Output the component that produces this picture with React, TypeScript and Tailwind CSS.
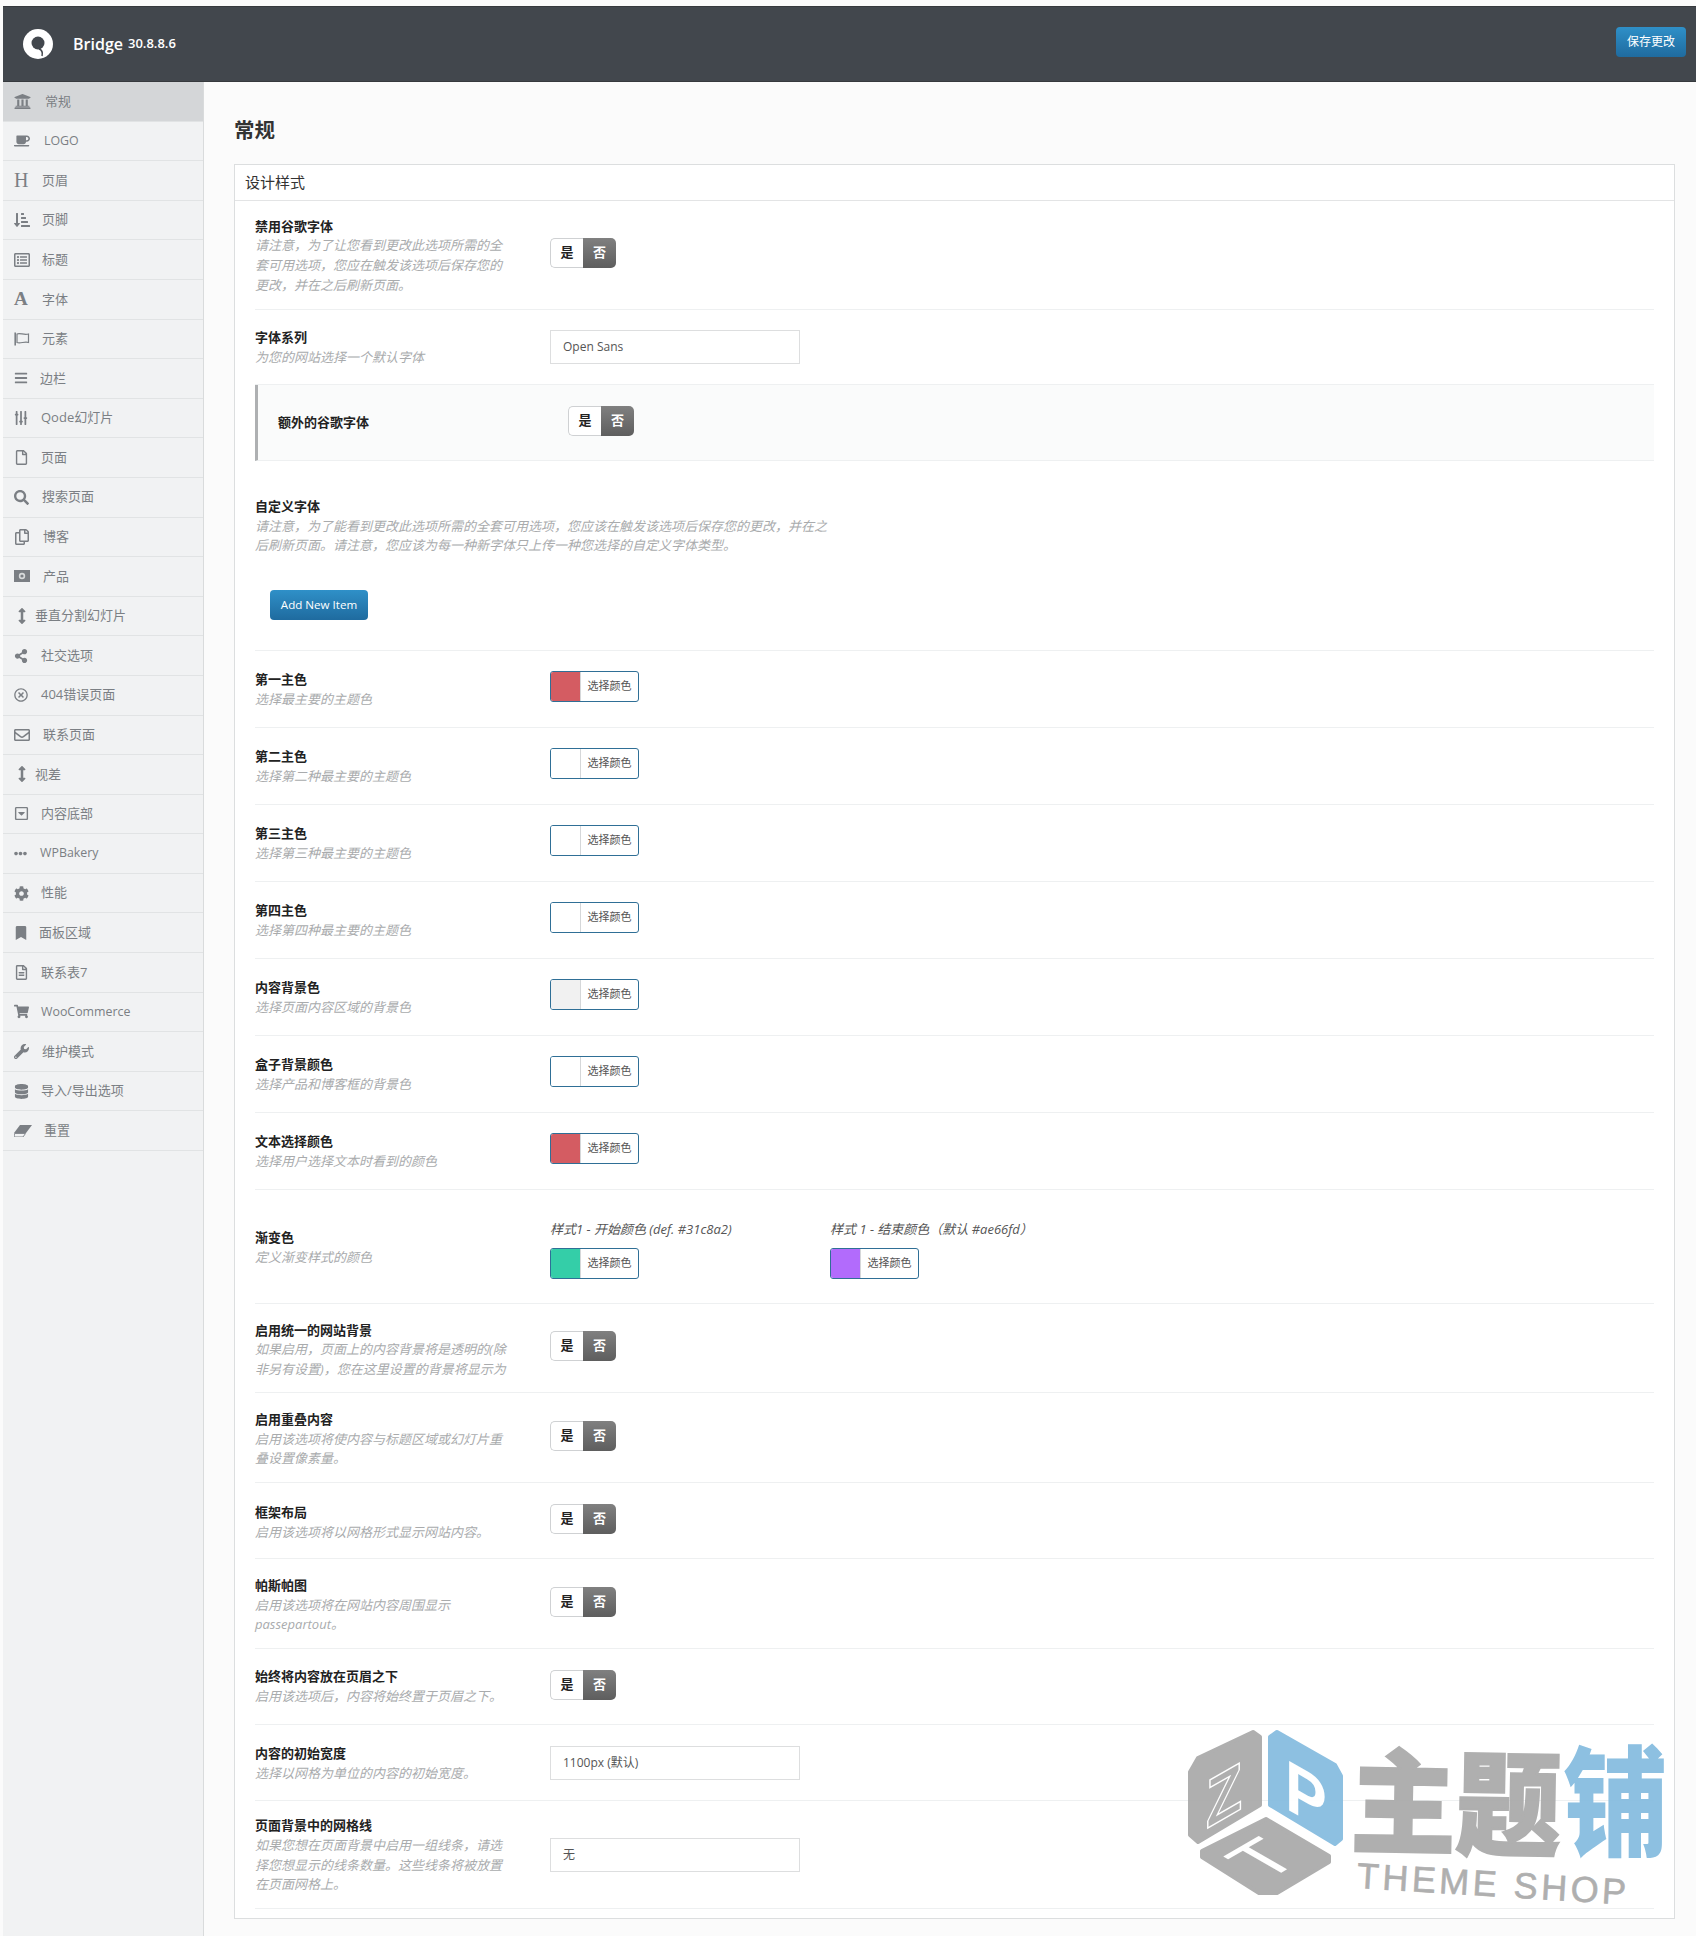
import type { ReactNode } from 'react'
import {
  FaUniversity, FaCoffee, FaSortAmountDownAlt, FaRegListAlt, FaBars, FaSlidersH,
  FaRegFile, FaSearch, FaRegCopy, FaArrowsAltV, FaShareAlt, FaRegTimesCircle, FaRegEnvelope,
  FaRegCaretSquareDown, FaEllipsisH, FaCog, FaBookmark, FaRegFileAlt, FaShoppingCart, FaWrench, FaDatabase,
} from 'react-icons/fa'

const FONT = "font-['Open_Sans','Noto_Sans_CJK_SC',sans-serif]"

function FlagIcon() {
  return (
    <svg viewBox="0 0 16 16" className="w-[16px] h-[16px]" fill="none" stroke="currentColor" strokeWidth="1.2">
      <path d="M1.2 1.5v13" strokeWidth="1.6" />
      <path d="M3 3C6 1.5 10 4.5 14.5 3V11.5C10.5 10 6.5 13 3 11.5Z" />
    </svg>
  )
}

function CashIcon() {
  return (
    <svg viewBox="0 0 16 14" className="w-[16px] h-[14px]">
      <rect x="0" y="1" width="16" height="12" fill="currentColor" />
      <circle cx="8" cy="7" r="3.2" fill="#d8dadb" />
      <circle cx="8" cy="7" r="1.6" fill="currentColor" />
    </svg>
  )
}

function EraserIcon() {
  return (
    <svg viewBox="0 0 18 12" className="w-[18px] h-[12px]">
      <path d="M6 0H18L12 8H0Z" fill="currentColor" />
      <path d="M0.5 8.5H11.5L9 12H0Z" fill="none" stroke="currentColor" strokeWidth="0.9" />
    </svg>
  )
}

const menu: { label: string; icon: ReactNode; slot: string; active?: boolean; latin?: boolean }[] = [
  { label: '常规', icon: <FaUniversity size={17} />, slot: 'w-[31px]', active: true },
  { label: 'LOGO', icon: <FaCoffee size={16} />, slot: 'w-[30px]', latin: true },
  { label: '页眉', icon: <span className="font-['Liberation_Serif',serif] text-[20px] leading-[20px]">H</span>, slot: 'w-[28px]' },
  { label: '页脚', icon: <FaSortAmountDownAlt size={16} />, slot: 'w-[28px]' },
  { label: '标题', icon: <FaRegListAlt size={16} />, slot: 'w-[28px]' },
  { label: '字体', icon: <span className="font-['Liberation_Serif',serif] font-bold text-[19px] leading-[20px]">A</span>, slot: 'w-[28px]' },
  { label: '元素', icon: <FlagIcon />, slot: 'w-[28px]' },
  { label: '边栏', icon: <FaBars size={14} />, slot: 'w-[26px]' },
  { label: 'Qode幻灯片', icon: <FaSlidersH size={14} className="rotate-90" />, slot: 'w-[27px]' },
  { label: '页面', icon: <FaRegFile size={15} />, slot: 'w-[27px]' },
  { label: '搜索页面', icon: <FaSearch size={15} />, slot: 'w-[28px]' },
  { label: '博客', icon: <FaRegCopy size={16} />, slot: 'w-[29px]' },
  { label: '产品', icon: <CashIcon />, slot: 'w-[29px]' },
  { label: '垂直分割幻灯片', icon: <FaArrowsAltV size={16} />, slot: 'w-[21px]' },
  { label: '社交选项', icon: <FaShareAlt size={14} />, slot: 'w-[27px]' },
  { label: '404错误页面', icon: <FaRegTimesCircle size={14} />, slot: 'w-[27px]' },
  { label: '联系页面', icon: <FaRegEnvelope size={16} />, slot: 'w-[29px]' },
  { label: '视差', icon: <FaArrowsAltV size={16} />, slot: 'w-[21px]' },
  { label: '内容底部', icon: <FaRegCaretSquareDown size={15} />, slot: 'w-[27px]' },
  { label: 'WPBakery', icon: <FaEllipsisH size={13} />, slot: 'w-[26px]', latin: true },
  { label: '性能', icon: <FaCog size={15} />, slot: 'w-[27px]' },
  { label: '面板区域', icon: <FaBookmark size={14} />, slot: 'w-[25px]' },
  { label: '联系表7', icon: <FaRegFileAlt size={15} />, slot: 'w-[27px]' },
  { label: 'WooCommerce', icon: <FaShoppingCart size={15} />, slot: 'w-[27px]', latin: true },
  { label: '维护模式', icon: <FaWrench size={15} />, slot: 'w-[28px]' },
  { label: '导入/导出选项', icon: <FaDatabase size={15} />, slot: 'w-[27px]' },
  { label: '重置', icon: <EraserIcon />, slot: 'w-[30px]' },
]

function Toggle() {
  return (
    <div className="flex w-[66px] h-[30px] mb-[4px] text-[13px] font-bold">
      <span className="w-[33px] flex items-center justify-center bg-white border border-r-0 border-[#cfd1d3] rounded-l-[5px] text-[#222]">是</span>
      <span className="w-[33px] flex items-center justify-center rounded-r-[5px] text-white bg-linear-to-b from-[#808080] to-[#5e5e5e]">否</span>
    </div>
  )
}

function ColorPicker({ swatch, up }: { swatch: string; up?: boolean }) {
  return (
    <div className={`flex w-[89px] h-[31px] rounded-[3px] border border-[#2f6f96] overflow-hidden bg-white ${up ? 'mb-[5px]' : ''}`}>
      <span className={`w-[30px] border-r border-[#d5d7d9] ${swatch}`} />
      <span className="flex-1 flex items-center justify-center text-[11px] text-[#555]">选择颜色</span>
    </div>
  )
}

function TextInput({ value }: { value: string }) {
  return (
    <div className="w-[250px] h-[34px] border border-[#dddedf] bg-white px-[12px] flex items-center text-[12px] text-[#555]">
      {value}
    </div>
  )
}

function Label({ title, lines }: { title: string; lines: string[] }) {
  return (
    <div className="leading-[19.6px] text-[13px]">
      <div className="font-bold text-[#222]">{title}</div>
      {lines.map((l) => (
        <div key={l} className="italic text-[#a9abad] whitespace-nowrap">{l}</div>
      ))}
    </div>
  )
}

function Row({ title, lines, height, offset = 'pt-[2px]', children }: { title: string; lines: string[]; height: string; offset?: string; children?: ReactNode }) {
  return (
    <div className={`flex items-center border-b border-[#eef0f1] ${height}`}>
      <div className={`w-[295px] shrink-0 ${offset}`}>
        <Label title={title} lines={lines} />
      </div>
      {children}
    </div>
  )
}

const colorRows = [
  { title: '第一主色', desc: '选择最主要的主题色', swatch: 'bg-[#d45c62]' },
  { title: '第二主色', desc: '选择第二种最主要的主题色', swatch: 'bg-white' },
  { title: '第三主色', desc: '选择第三种最主要的主题色', swatch: 'bg-white' },
  { title: '第四主色', desc: '选择第四种最主要的主题色', swatch: 'bg-white' },
  { title: '内容背景色', desc: '选择页面内容区域的背景色', swatch: 'bg-[#f1f1f1]' },
  { title: '盒子背景颜色', desc: '选择产品和博客框的背景色', swatch: 'bg-white' },
  { title: '文本选择颜色', desc: '选择用户选择文本时看到的颜色', swatch: 'bg-[#d45c62]' },
]

function Watermark() {
  return (
    <div className="absolute left-[1187px] top-[1729px] w-[480px] h-[175px] pointer-events-none opacity-95">
      <svg viewBox="0 0 156 168" className="absolute left-0 top-0 w-[156px] h-[168px]">
        <path d="M66 3 73 8V76L11 113 3 106V43L11 29Z" fill="#ababab" stroke="#ababab" strokeWidth="4" strokeLinejoin="round" />
        <path d="M90 3 148 36 154 47V110L148 115 83 76V8Z" fill="#87bde0" stroke="#87bde0" strokeWidth="4" strokeLinejoin="round" />
        <path d="M79 90 142 127V133L90 164H72L15 128V122Z" fill="#ababab" stroke="#ababab" strokeWidth="4" strokeLinejoin="round" />
        <text transform="matrix(0.87 -0.5 0 1 19 100)" fontFamily="Liberation Sans, sans-serif" fontSize="68" fontWeight="700" fill="#ababab" stroke="#ffffff" strokeWidth="1.6">Z</text>
        <text transform="matrix(0.87 0.5 0 1 98 79)" fontFamily="Liberation Sans, sans-serif" fontSize="72" fontWeight="700" fill="#ffffff">P</text>
        <text transform="matrix(0.87 -0.5 0.87 0.5 78 153)" fontFamily="Liberation Sans, sans-serif" fontSize="72" fill="#ffffff">T</text>
      </svg>
      <span className="absolute left-[164px] top-[9px] text-[105px] leading-[116px] font-black text-[#ababab] font-['Noto_Sans_CJK_SC',sans-serif] [-webkit-text-stroke:2px_#ababab] whitespace-nowrap rotate-1 scale-y-[1.08]">主题</span>
      <span className="absolute left-[376px] top-[8px] text-[105px] leading-[116px] font-black text-[#87bde0] font-['Noto_Sans_CJK_SC',sans-serif] scale-y-[1.14]">铺</span>
      <span className="absolute left-[170px] top-[127px] text-[36px] leading-[40px] tracking-[3.5px] text-[#ababab] font-['Liberation_Sans',sans-serif] [-webkit-text-stroke:0.6px_#ababab] whitespace-nowrap origin-left rotate-[3.5deg]">THEME SHOP</span>
    </div>
  )
}

export default function App() {
  return (
    <div className={`relative h-[1936px] w-[1696px] overflow-hidden bg-[#fbfbfb] pt-[6px] pl-[3px] ${FONT}`}>
      {/* Header */}
      <header className="h-[76px] bg-[#42474d] flex items-center justify-between pl-[20px] pr-[10px] border-y border-[#36393d]">
        <div className="flex items-center">
          <svg viewBox="0 0 30 30" className="w-[30px] h-[30px]">
            <circle cx="15" cy="15" r="15" fill="#fff" />
            <circle cx="15" cy="14" r="6.5" fill="#42474d" />
            <path d="M16 20c3 1 4 3 3 7" fill="none" stroke="#42474d" strokeWidth="1.5" />
          </svg>
          <span className="ml-[20px] text-[16px] font-semibold text-white">Bridge</span>
          <span className="ml-[5px] text-[13px] font-semibold text-white">30.8.8.6</span>
        </div>
        <button className="w-[70px] h-[30px] rounded-[4px] text-[12px] text-white bg-linear-to-b from-[#2f90c8] to-[#1f6b9f] mt-[-4px]">保存更改</button>
      </header>

      <div className="flex">
        {/* Sidebar */}
        <aside className="w-[201px] h-[1854px] shrink-0 bg-[#f1f2f3] border-r border-[#d9dbdc]">
          {menu.map((m) => (
            <div
              key={m.label}
              className={`h-[39.6px] flex items-center pl-[11px] border-b border-[#e1e3e4] text-[#7b7f84] ${m.latin ? 'text-[12.4px]' : 'text-[13px]'} ${m.active ? 'bg-[#d4d6d8]' : ''}`}
            >
              <span className={`${m.slot} shrink-0 flex items-center`}>{m.icon}</span>
              <span>{m.label}</span>
            </div>
          ))}
        </aside>

        {/* Main */}
        <main className="flex-1 pl-[30px] pr-[21px]">
          <h1 className="pt-[36px] h-[82px] text-[20.5px] leading-[24px] font-bold text-[#333]">常规</h1>
          <section className="h-[1755px] bg-white border border-[#dcdedf]">
            <div className="h-[36px] flex items-center pl-[10px] border-b border-[#e3e4e5] text-[15px] text-[#333]">设计样式</div>
            <div className="pl-[20px] pr-[20px]">
              <Row
                title="禁用谷歌字体"
                lines={['请注意，为了让您看到更改此选项所需的全', '套可用选项，您应在触发该选项后保存您的', '更改，并在之后刷新页面。']}
                height="h-[109px]"
              >
                <Toggle />
              </Row>
              <Row title="字体系列" lines={['为您的网站选择一个默认字体']} height="h-[75px]">
                <TextInput value="Open Sans" />
              </Row>

              <div className="h-[76px] flex items-center bg-[#fafbfb] border-l-[3px] border-b border-l-[#aeb0b2] border-b-[#eef0f1] pl-[20px]">
                <div className="w-[290px] text-[13px] font-bold text-[#222]">额外的谷歌字体</div>
                <Toggle />
              </div>

              <div className="h-[190px] pt-[36px] border-b border-[#eef0f1]">
                <Label
                  title="自定义字体"
                  lines={['请注意，为了能看到更改此选项所需的全套可用选项，您应该在触发该选项后保存您的更改，并在之', '后刷新页面。请注意，您应该为每一种新字体只上传一种您选择的自定义字体类型。']}
                />
                <button className="mt-[34px] ml-[15px] w-[98px] h-[30px] rounded-[4px] text-[11.6px] text-white bg-linear-to-b from-[#2f90c8] to-[#1f6b9f]">Add New Item</button>
              </div>

              {colorRows.map((r) => (
                <Row key={r.title} title={r.title} lines={[r.desc]} height="h-[77px]">
                  <ColorPicker swatch={r.swatch} up />
                </Row>
              ))}

              <Row title="渐变色" lines={['定义渐变样式的颜色']} height="h-[114px]">
                <div className="flex pt-[5px]">
                  <div className="w-[280px]">
                    <div className="text-[13px] leading-[20px] italic text-[#555] mb-[9px]">样式1 - 开始颜色 (def. #31c8a2)</div>
                    <ColorPicker swatch="bg-[#34cea8]" />
                  </div>
                  <div>
                    <div className="text-[13px] leading-[20px] italic text-[#555] mb-[9px]">样式 1 - 结束颜色（默认 #ae66fd）</div>
                    <ColorPicker swatch="bg-[#b26bfc]" />
                  </div>
                </div>
              </Row>

              <Row title="启用统一的网站背景" lines={['如果启用，页面上的内容背景将是透明的(除', '非另有设置)，您在这里设置的背景将显示为']} height="h-[89px]" offset="pt-[4px]">
                <Toggle />
              </Row>
              <Row title="启用重叠内容" lines={['启用该选项将使内容与标题区域或幻灯片重', '叠设置像素量。']} height="h-[90px]" offset="pt-[4px]">
                <Toggle />
              </Row>
              <Row title="框架布局" lines={['启用该选项将以网格形式显示网站内容。']} height="h-[76px]" offset="pt-[4px]">
                <Toggle />
              </Row>
              <Row title="帕斯帕图" lines={['启用该选项将在网站内容周围显示', 'passepartout。']} height="h-[90px]" offset="pt-[4px]">
                <Toggle />
              </Row>
              <Row title="始终将内容放在页眉之下" lines={['启用该选项后，内容将始终置于页眉之下。']} height="h-[76px]" offset="pt-0">
                <Toggle />
              </Row>
              <Row title="内容的初始宽度" lines={['选择以网格为单位的内容的初始宽度。']} height="h-[76px]">
                <TextInput value="1100px (默认)" />
              </Row>
              <Row
                title="页面背景中的网格线"
                lines={['如果您想在页面背景中启用一组线条，请选', '择您想显示的线条数量。这些线条将被放置', '在页面网格上。']}
                height="h-[108px]"
              >
                <TextInput value="无" />
              </Row>
            </div>
          </section>
        </main>
      </div>

      <Watermark />
    </div>
  )
}
